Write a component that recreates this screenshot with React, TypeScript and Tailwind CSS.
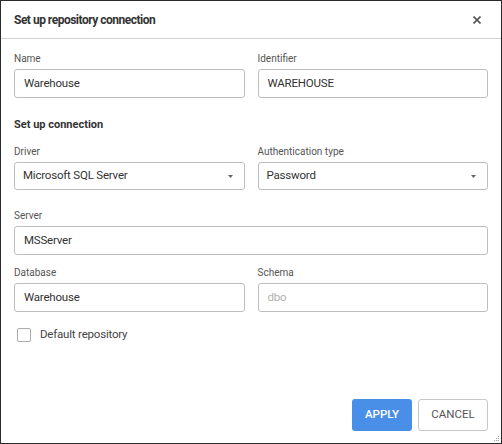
import React from "react";

const font = { fontFamily: "Roboto, 'Liberation Sans', Arial, sans-serif" };

function Label({ children }: { children: React.ReactNode }) {
  return <div className="h-[14px] text-[10px] leading-[14px] text-[#555] mb-[3px]">{children}</div>;
}

function Input({ value, placeholder }: { value?: string; placeholder?: string }) {
  return (
    <div className="h-[29px] border border-[#bdbdbd] rounded-[3px] flex items-center px-[9px] text-[11.5px] tracking-[-0.2px] bg-white">
      {value ? <span className="text-[#333]">{value}</span> : <span className="text-[#b0b0b0]">{placeholder}</span>}
    </div>
  );
}

function Select({ value }: { value: string }) {
  return (
    <div className="h-[28px] border border-[#bdbdbd] rounded-[3px] flex items-center justify-between pl-[8px] pr-[11px] text-[11.5px] tracking-[-0.2px] bg-white">
      <span className="text-[#333]">{value}</span>
      <svg width="5" height="3" viewBox="0 0 5 3">
        <path d="M0 0 L5 0 L2.5 3 Z" fill="#666" />
      </svg>
    </div>
  );
}

export default function App() {
  return (
    <div style={font} className="relative w-[502px] h-[444px] border border-[#2b2b2b] bg-white flex flex-col">
      <div className="h-[38px] border-b border-[#d0d0d0] flex items-center justify-between pl-[13px] pr-[20px]">
        <span className="text-[12px] tracking-[-0.5px] font-bold text-[#333]">Set up repository connection</span>
        <svg width="8" height="8" viewBox="0 0 8 8">
          <path d="M0.5 0.5 L7.5 7.5 M7.5 0.5 L0.5 7.5" stroke="#555" strokeWidth="1.6" />
        </svg>
      </div>
      <div className="flex-1 flex flex-col px-[13px] pt-[13px] pb-[12px]">
        <div className="grid grid-cols-2 gap-x-[13px]">
          <div>
            <Label>Name</Label>
            <Input value="Warehouse" />
          </div>
          <div>
            <Label>Identifier</Label>
            <Input value="WAREHOUSE" />
          </div>
        </div>
        <div className="mt-[19px] h-[16px] leading-[16px] text-[11px] font-bold text-[#333]">Set up connection</div>
        <div className="grid grid-cols-2 gap-x-[13px] mt-[12px]">
          <div>
            <Label>Driver</Label>
            <Select value="Microsoft SQL Server" />
          </div>
          <div>
            <Label>Authentication type</Label>
            <Select value="Password" />
          </div>
        </div>
        <div className="mt-[19px]">
          <Label>Server</Label>
          <Input value="MSServer" />
        </div>
        <div className="grid grid-cols-2 gap-x-[13px] mt-[11px]">
          <div>
            <Label>Database</Label>
            <Input value="Warehouse" />
          </div>
          <div>
            <Label>Schema</Label>
            <Input placeholder="dbo" />
          </div>
        </div>
        <div className="flex items-center mt-[14px] pl-[3px]">
          <div className="w-[14px] h-[14px] border border-[#aaa] rounded-[2px] bg-white" />
          <span className="ml-[9px] text-[11.5px] tracking-[-0.2px] text-[#444]">Default repository</span>
        </div>
        <div className="flex-1" />
        <div className="flex justify-end gap-[6px]">
          <button className="h-[32px] w-[60px] rounded-[3px] bg-[#4a8fe7] text-white text-[11.5px] font-medium">APPLY</button>
          <button className="h-[32px] w-[70px] rounded-[3px] border border-[#c8c8c8] bg-white text-[#555] text-[11.5px]">CANCEL</button>
        </div>
      </div>
      <svg className="absolute right-[1px] bottom-[1px]" width="6" height="6" viewBox="0 0 6 6">
        <rect x="4" y="0" width="1" height="1" fill="#999" />
        <rect x="2" y="2" width="1" height="1" fill="#999" />
        <rect x="4" y="2" width="1" height="1" fill="#999" />
        <rect x="0" y="4" width="1" height="1" fill="#999" />
        <rect x="2" y="4" width="1" height="1" fill="#999" />
        <rect x="4" y="4" width="1" height="1" fill="#999" />
      </svg>
    </div>
  );
}
